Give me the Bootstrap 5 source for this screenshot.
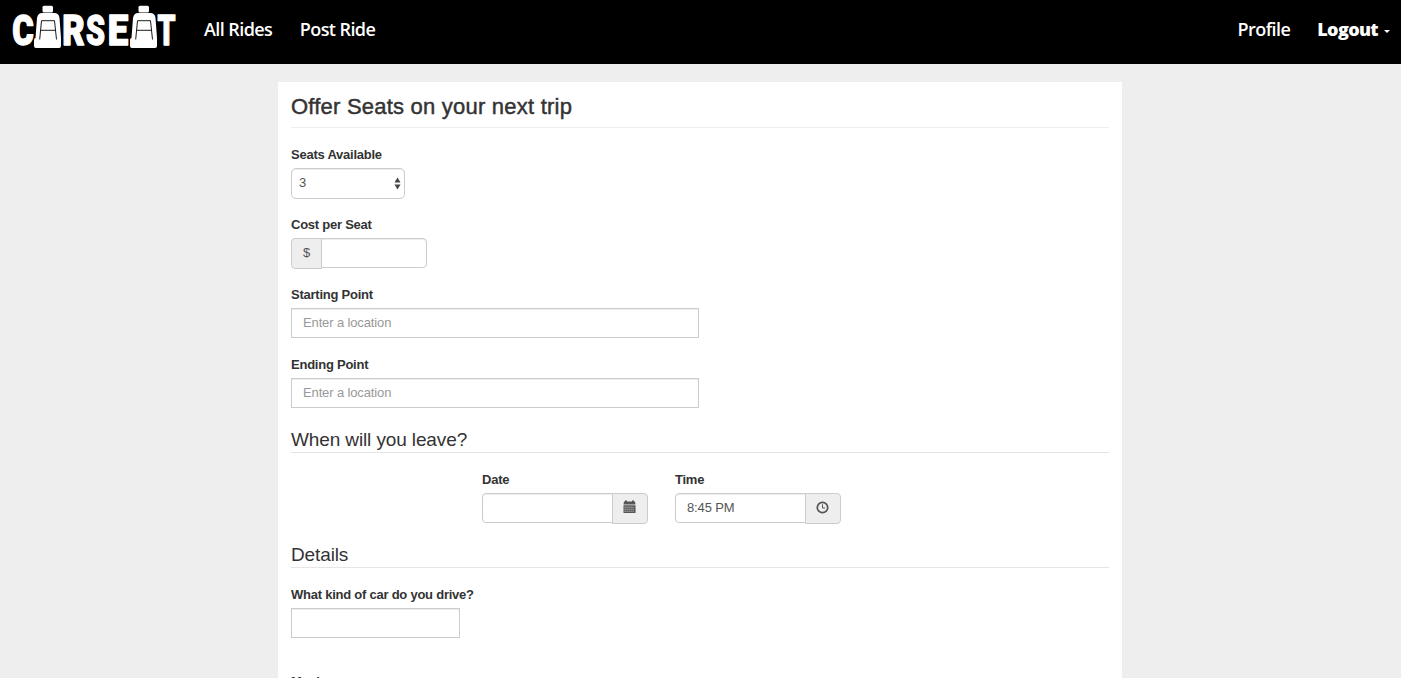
<!DOCTYPE html>
<html lang="en">
<head>
<meta charset="utf-8">
<meta name="viewport" content="width=device-width, initial-scale=1">
<title>Carseat - Post Ride</title>
<link rel="stylesheet" href="https://cdn.jsdelivr.net/npm/bootstrap@5.3.0/dist/css/bootstrap.min.css">
<style>
body{background:#eee;color:#333;font:13px/19px "Liberation Sans",Arial,sans-serif;height:678px;overflow:hidden}
.topbar{background:#000;height:64px;padding:0 11px 0 12px;font-family:"Open Sans",sans-serif;font-size:18px;font-weight:600}
.topbar .nav-link{color:#fff;padding:0;line-height:24px;white-space:nowrap;letter-spacing:-.58px}
.brand-logo{width:168px;height:64px}
.menu-left{margin-left:24px;gap:27.5px;padding-top:17px}
.menu-right{gap:27px;padding-top:17px}
.topbar .logout{font-weight:800;letter-spacing:-.65px}
.logout::after{border-top-width:3px;border-left-width:3px;border-right-width:3px;margin-left:6px;vertical-align:3px}
.sheet{width:844px;height:596px;overflow:hidden;margin:18px 0 0 278px;padding:10px 13px 0;background:#fff}
.page-title{font-size:22px;line-height:28px;height:36px;margin:0 0 17px;padding-top:1px;border-bottom:1px solid #eee;letter-spacing:.22px;-webkit-text-stroke:.45px #333}
.section-title{font-size:19px;line-height:26px;height:28px;margin:0 0 17px;padding-top:2px;border-bottom:1px solid #e5e5e5;letter-spacing:-.12px}
.field{height:70px}
.form-label{display:block;font-weight:700;margin:0 0 4px;line-height:19px;letter-spacing:-.24px;white-space:nowrap}
.form-control,.form-select{height:30px;min-height:0;padding:0 11px 2px;font-size:13px;line-height:26px;color:#555;border:1px solid #ccc;border-radius:0;box-shadow:inset 0 1px 1px rgba(0,0,0,.075);letter-spacing:-.13px}
.form-control::placeholder{color:#999;opacity:1}
.form-select{width:114px;height:31px;padding-left:7px;border-radius:5px;background:#fff}
.select-box{width:114px}
.arrows{right:4px;top:9px;width:7px;height:13px}
.input-group{align-items:flex-start;border-radius:4px}
.input-group-text{height:31px;padding:0 0 2px;justify-content:center;background:#eee;color:#555;border:1px solid #ccc;font-size:13px;border-radius:4px}
.input-group>.form-control{border-radius:4px}
.cost{width:136px}.cost .input-group-text{width:31px}
.place{width:408px}
.schedule{padding-left:191px;gap:27px}
.when{width:166px}.when .input-group-text{width:36px;padding:0 2px 3px 0}
.car{width:169px}
.car-field{margin-bottom:17px}
</style>
</head>
<body>
<nav class="topbar d-flex">
  <a href="#" class="d-block" aria-label="Carseat">
    <svg class="brand-logo" viewBox="12 0 168 64">
      <defs>
        <g id="seat">
          <rect x="42.5" y="5.7" width="10.5" height="6.8" rx="1.5"/>
          <path d="M42 13H54Q59 13 59.500 18L61 38Q61 39 61 40V46Q61 48 59 48H36Q34 48 34 46V40Q34 38 35.500 38L37 18Q38 13 42 13Z"/>
          <path d="M39.700 39.500L41.500 20.700H54.500L56.500 39.500M40.700 30.300H55.500" fill="none" stroke="#000" stroke-width=".9"/>
        </g>
      </defs>
      <g fill="#fff">
        <g font-family="Roboto,sans-serif" font-weight="900" font-size="43" stroke="#fff" stroke-width="1.400" stroke-linejoin="round">
          <text x="12.300" y="44.800" textLength="21.500" lengthAdjust="spacingAndGlyphs">C</text>
          <text x="62.300" y="44.800" textLength="22.500" lengthAdjust="spacingAndGlyphs">R</text>
          <text x="86" y="44.800" textLength="19" lengthAdjust="spacingAndGlyphs">S</text>
          <text x="107.700" y="44.800" textLength="20.500" lengthAdjust="spacingAndGlyphs">E</text>
          <text x="157.500" y="44.800" textLength="18" lengthAdjust="spacingAndGlyphs">T</text>
        </g>
        <use href="#seat"/><use href="#seat" x="96"/>
      </g>
    </svg>
  </a>
  <div class="menu-left d-flex"><a class="nav-link" href="#">All Rides</a><a class="nav-link" href="#">Post Ride</a></div>
  <div class="menu-right d-flex ms-auto"><a class="nav-link" href="#">Profile</a><a class="nav-link logout dropdown-toggle" href="#">Logout</a></div>
</nav>
<main class="sheet">
  <h1 class="page-title">Offer Seats on your next trip</h1>
  <form>
    <div class="field">
      <label class="form-label" for="seats">Seats Available</label>
      <div class="select-box position-relative">
        <select id="seats" class="form-select"><option>3</option></select>
        <svg class="arrows position-absolute pe-none" viewBox="0 0 7 13" fill="#444"><path d="M3.500 .5L6.500 5.500H.5ZM.5 7.500H6.500L3.500 12.500Z"/></svg>
      </div>
    </div>
    <div class="field">
      <label class="form-label" for="cost">Cost per Seat</label>
      <div class="input-group cost"><span class="input-group-text">$</span><input id="cost" class="form-control"></div>
    </div>
    <div class="field"><label class="form-label" for="from">Starting Point</label><input id="from" class="form-control place" placeholder="Enter a location"></div>
    <div class="field"><label class="form-label" for="to">Ending Point</label><input id="to" class="form-control place" placeholder="Enter a location"></div>
    <h2 class="section-title">When will you leave?</h2>
    <div class="schedule d-flex">
      <div class="field">
        <label class="form-label" for="date">Date</label>
        <div class="input-group when"><input id="date" class="form-control"><span class="input-group-text">
          <svg width="13" height="14" viewBox="0 0 13 14"><path fill="#555" d="M1 1.500H2V.5H4V1.500H9V.5H11V1.500H12L12.500 4.500H.5ZM.5 5.300H12.500V13H.5Z"/><path d="M1.500 7.200H11.500M1.500 9.200H11.500M1.500 11.200H11.500" stroke="#eee" stroke-width="1" stroke-dasharray="1.200 .8" opacity=".75"/></svg>
        </span></div>
      </div>
      <div class="field">
        <label class="form-label" for="time">Time</label>
        <div class="input-group when"><input id="time" class="form-control" value="8:45 PM"><span class="input-group-text">
          <svg width="13" height="13" viewBox="0 0 13 13" fill="none" stroke="#555"><circle cx="6.500" cy="6.500" r="5.200" stroke-width="1.700"/><path d="M6.500 3.300V7H9"/></svg>
        </span></div>
      </div>
    </div>
    <h2 class="section-title">Details</h2>
    <div class="field car-field"><label class="form-label" for="car">What kind of car do you drive?</label><input id="car" class="form-control car"></div>
    <label class="form-label">Music</label>
  </form>
</main>
<script src="https://cdn.jsdelivr.net/npm/bootstrap@5.3.0/dist/js/bootstrap.bundle.min.js"></script>
</body>
</html>
